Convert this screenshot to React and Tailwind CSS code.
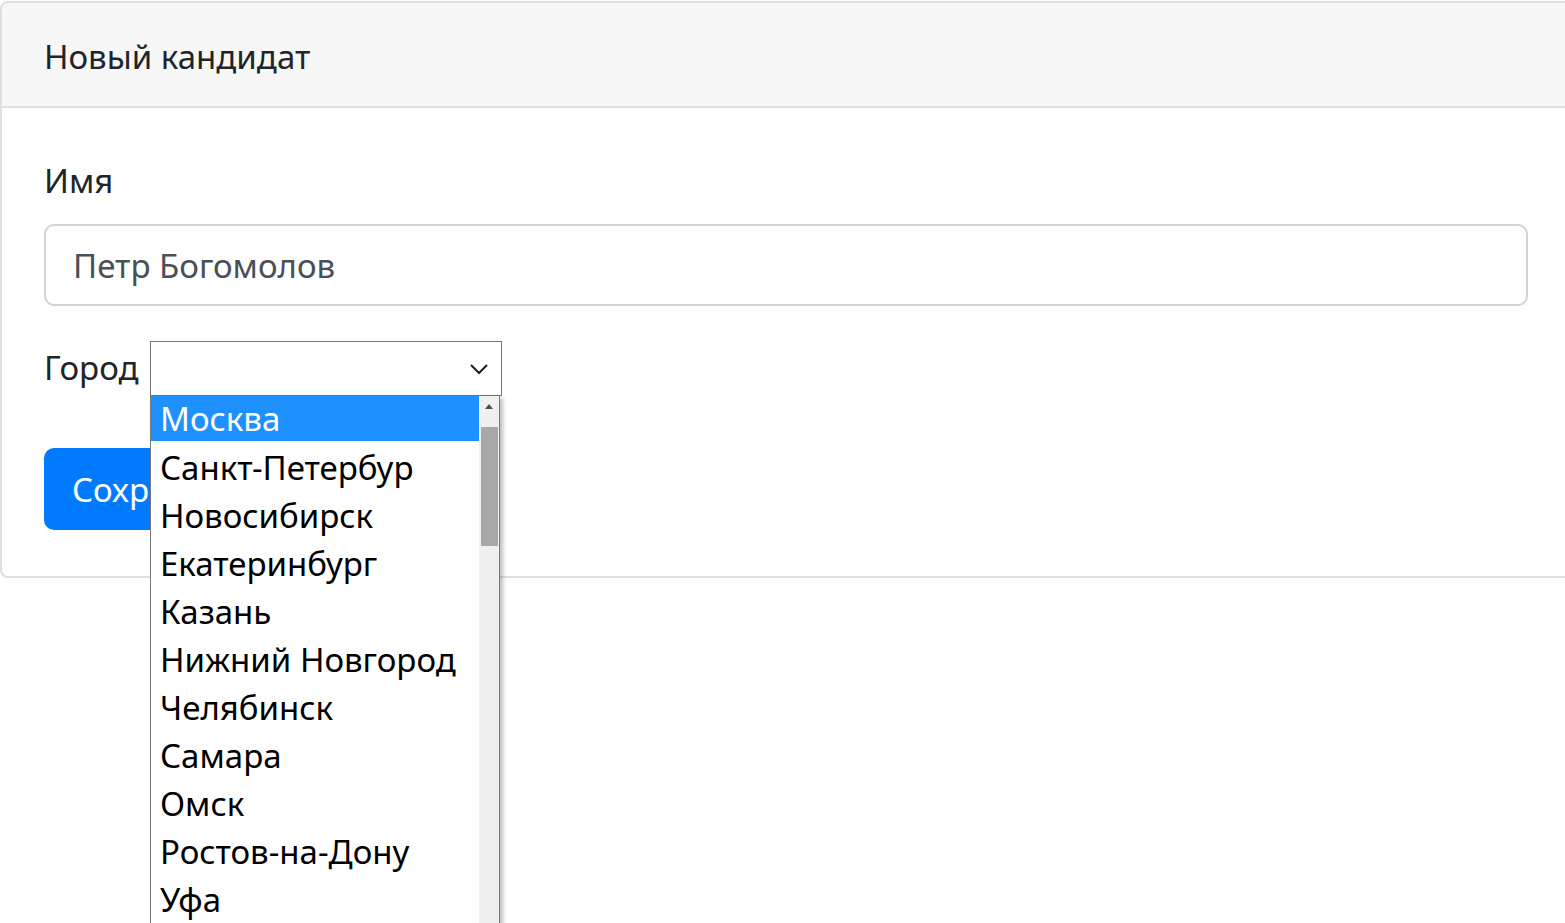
import React from 'react';

const cities = [
  'Москва',
  'Санкт-Петербур',
  'Новосибирск',
  'Екатеринбург',
  'Казань',
  'Нижний Новгород',
  'Челябинск',
  'Самара',
  'Омск',
  'Ростов-на-Дону',
  'Уфа',
  'Красноярск',
];

export default function App() {
  return (
    <div
      className="relative h-[923px] w-[1565px] overflow-hidden bg-white text-[33px] leading-[53px] text-[#212529]"
      style={{ fontFamily: '"Noto Sans", "Open Sans", sans-serif' }}
    >
      {/* Card */}
      <div className="mt-px w-[1572px] rounded-[8px] border-2 border-[#dfdfdf]">
        <div className="rounded-t-[6px] border-b-2 border-[#dfdfdf] bg-[#f7f7f7] px-[42px] pt-[27px] pb-[23px]">
          Новый кандидат
        </div>

        <div className="px-[42px] pt-[46px] pb-[46px]">
          {/* Name */}
          <label className="block">Имя</label>
          <div className="mt-[17px] flex h-[82px] w-[1484px] items-center rounded-[10px] border-2 border-[#ced4da] px-[27px] text-[#495057]">
            Петр Богомолов
          </div>

          {/* City */}
          <div className="mt-[35px] flex items-start">
            <label className="block w-[106px] shrink-0">Город</label>
            <div className="relative z-10 flex h-[55px] w-[352px] items-center justify-end border border-[#767676] bg-white pr-[12px]">
              <svg width="20" height="12" viewBox="0 0 20 12" fill="none">
                <path d="M2 2l8 8 8-8" stroke="#1f1f1f" strokeWidth="2" />
              </svg>
            </div>
          </div>

          <button className="mt-[52px] flex h-[82px] items-center rounded-[10px] bg-[#007bff] px-[28px] text-white">
            Сохранить
          </button>
        </div>
      </div>

      {/* Open dropdown list */}
      <div className="absolute left-[150px] top-[396px] z-20 flex h-[540px] w-[350px] border-x border-[#7a7a7a] bg-white shadow-[3px_2px_4px_rgba(0,0,0,0.25)]">
        <ul className="flex-1">
          {cities.map((c, i) => (
            <li
              key={c}
              className={
                i === 0
                  ? 'mb-[2px] flex h-[45px] items-center bg-[#1e90ff] pl-[9px] text-white'
                  : 'flex h-[48px] items-center pl-[9px] text-black'
              }
            >
              {c}
            </li>
          ))}
        </ul>
        {/* Scrollbar */}
        <div className="flex w-[20px] flex-col items-center bg-[#f0f0f0]">
          <svg className="mt-[8px]" width="8" height="5" viewBox="0 0 8 5">
            <path d="M0 5L4 0l4 5z" fill="#505050" />
          </svg>
          <div className="mt-[18px] h-[119px] w-[17px] bg-[#a8a8a8]" />
        </div>
      </div>
    </div>
  );
}
